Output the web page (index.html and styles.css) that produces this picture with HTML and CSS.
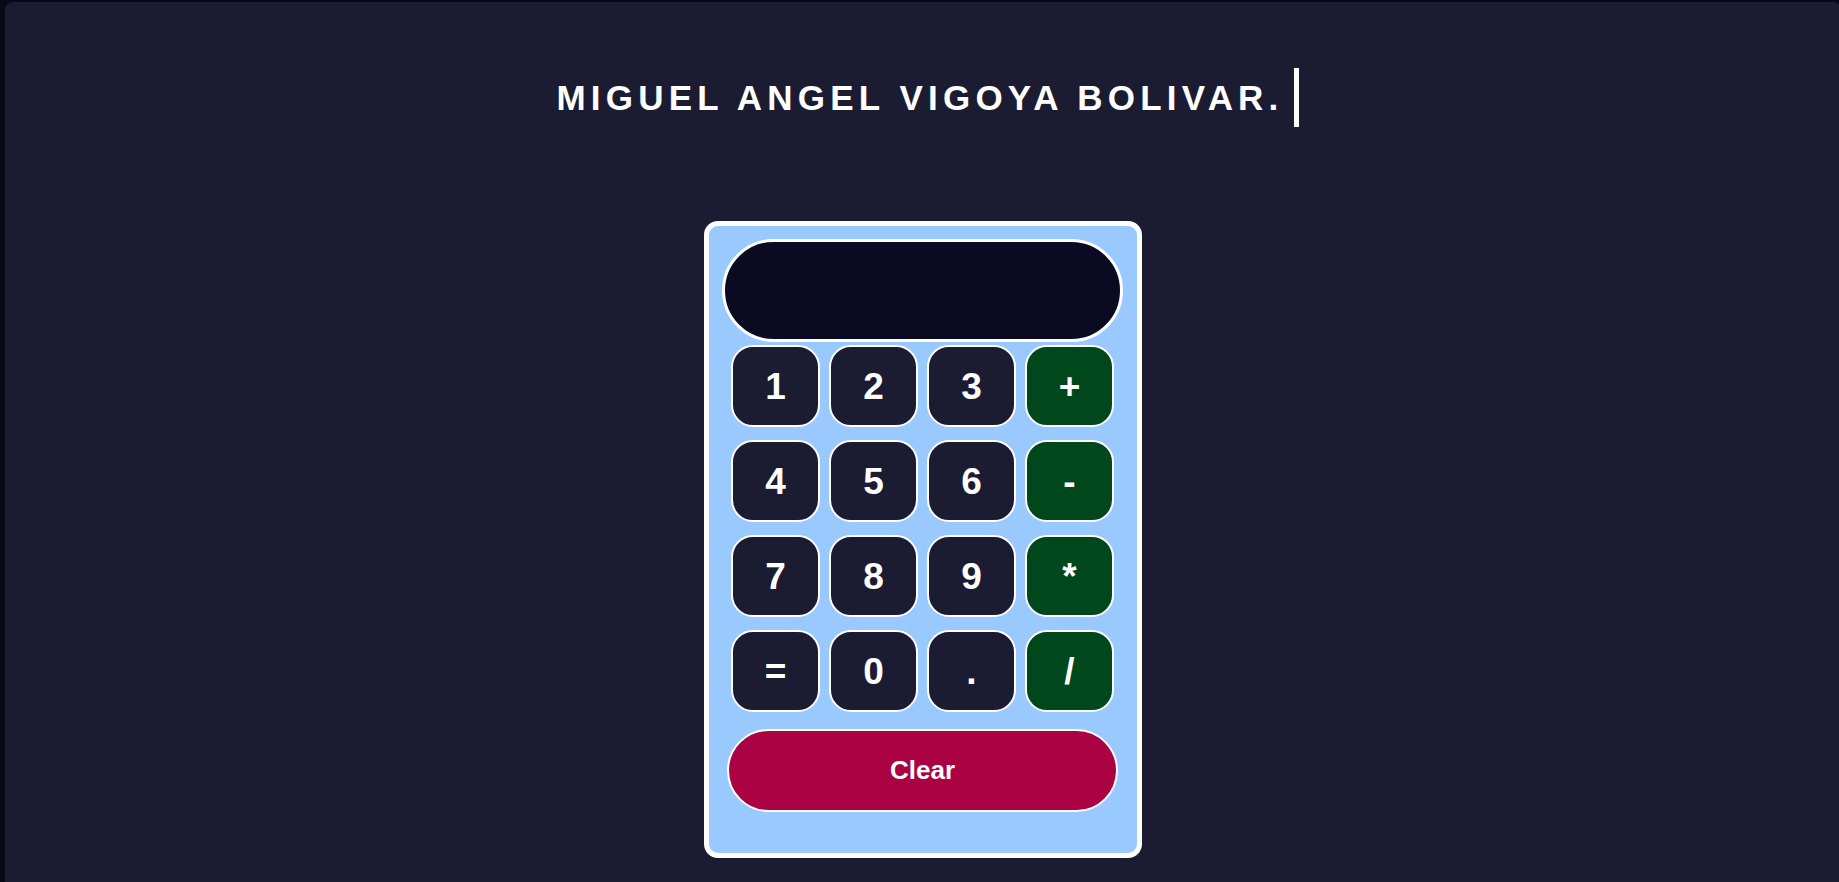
FILE: index.html
```html
<!DOCTYPE html>
<html lang="es">
<head>
<meta charset="utf-8">
<title>Calculadora</title>
<link rel="stylesheet" href="styles.css">
</head>
<body>
<main class="panel">
  <h1 class="title">MIGUEL ANGEL VIGOYA BOLIVAR.</h1>
  <div class="calc">
    <div class="display"></div>
    <div class="keys">
      <button class="key">1</button>
      <button class="key">2</button>
      <button class="key">3</button>
      <button class="key op">+</button>
      <button class="key">4</button>
      <button class="key">5</button>
      <button class="key">6</button>
      <button class="key op">-</button>
      <button class="key">7</button>
      <button class="key">8</button>
      <button class="key">9</button>
      <button class="key op">*</button>
      <button class="key">=</button>
      <button class="key">0</button>
      <button class="key">.</button>
      <button class="key op">/</button>
    </div>
    <button class="clear">Clear</button>
  </div>
</main>
</body>
</html>
```
FILE: styles.css
```css
html, body {
  margin: 0;
  padding: 0;
  height: 100%;
  overflow: hidden;
  background: #070919;
  font-family: "Liberation Sans", Arial, sans-serif;
}

.panel {
  box-sizing: border-box;
  margin: 2px -2px 0 5px;
  height: calc(100% + 20px);
  background: #1b1b32;
  border-radius: 8px;
  display: flex;
  flex-direction: column;
  align-items: center;
  padding-top: 66px;
}

.title {
  margin: 0 0 0 9px;
  display: inline-block;
  font-size: 35px;
  line-height: 59px;
  font-weight: 700;
  letter-spacing: 5.2px;
  color: #ffffff;
  border-right: 5px solid #ffffff;
  padding-right: 10px;
}

.calc {
  margin-top: 94px;
  width: 438px;
  box-sizing: border-box;
  border: 5px solid #ffffff;
  border-radius: 14px;
  background: #99c9ff;
  padding: 13px 14px 41px 13px;
}

.display {
  box-sizing: border-box;
  width: 401px;
  height: 103px;
  background: #0a0a23;
  border: 3px solid #ffffff;
  border-radius: 52px;
}

.keys {
  margin: 3px 0 0 9px;
  display: grid;
  grid-template-columns: repeat(4, 89px);
  grid-auto-rows: 82px;
  column-gap: 9px;
  row-gap: 13px;
}

.key {
  box-sizing: border-box;
  margin: 0;
  padding: 0;
  background: #1b1b32;
  border: 2px solid #ffffff;
  border-radius: 22px;
  color: #ffffff;
  font-family: "Liberation Sans", Arial, sans-serif;
  font-weight: 700;
  font-size: 37px;
  line-height: 1;
}

.key.op {
  background: #00471b;
}

.clear {
  display: block;
  box-sizing: border-box;
  margin: 17px 0 0 5px;
  width: 391px;
  height: 83px;
  padding: 0;
  background: #ab0244;
  border: 2px solid #ffffff;
  border-radius: 42px;
  color: #ffffff;
  font-family: "Liberation Sans", Arial, sans-serif;
  font-weight: 700;
  font-size: 26px;
}
```
